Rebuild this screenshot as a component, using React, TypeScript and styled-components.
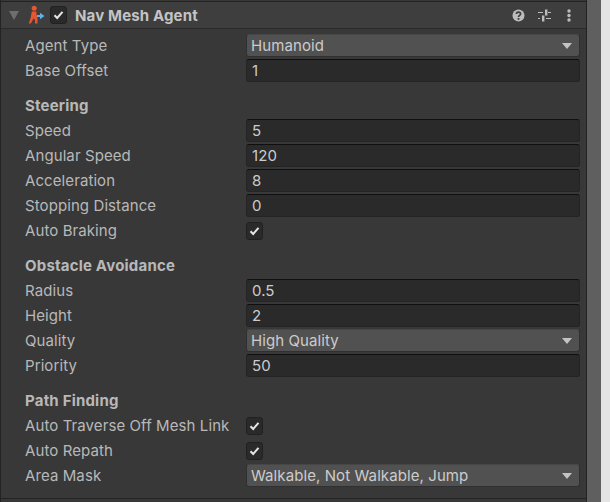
import React from 'react';
import styled, { createGlobalStyle } from 'styled-components';

const GlobalStyle = createGlobalStyle`
  html, body {
    margin: 0;
    padding: 0;
    background: #383838;
  }
`

const Pagina = styled.div`
  width: 610px;
  height: 502px;
  display: flex;
  overflow: hidden;
  font-family: Inter, "Liberation Sans", sans-serif;
  font-size: 15px;
  letter-spacing: 0.09px;
  color: #b8b8b8;
`

const Inspector = styled.div`
  width: 587px;
  box-sizing: border-box;
  border-left: 1px solid #232323;
  border-right: 1px solid #232323;
  display: flex;
  flex-direction: column;
`

const Cabecalho = styled.div`
  height: 28px;
  flex-shrink: 0;
  box-sizing: border-box;
  margin-top: 1px;
  border-top: 1px solid #232323;
  border-bottom: 1px solid #2a2a2a;
  background: #3e3e3e;
  display: flex;
  align-items: center;
  padding-left: 8px;
`

const Seta = styled.div`
  width: 0;
  height: 0;
  border-left: 5px solid transparent;
  border-right: 5px solid transparent;
  border-top: 9px solid #6e6e6e;
  margin-right: 9px;
`

const Titulo = styled.span`
  font-weight: 700;
  letter-spacing: 0.15px;
  color: #c4c4c4;
  margin-left: 8px;
  flex: 1;
`

const IconesCabecalho = styled.div`
  display: flex;
  align-items: center;
  column-gap: 13px;
  margin-right: 15px;
`

const Conteudo = styled.div`
  display: flex;
  flex-direction: column;
  padding: 4px 6px 0 24px;
  flex: 1;
`

const Linha = styled.div`
  height: 25px;
  display: grid;
  grid-template-columns: 221px 1fr;
  align-items: center;
`

const Secao = styled.div`
  height: 25px;
  margin-top: 10px;
  display: flex;
  align-items: center;
  font-weight: 700;
  letter-spacing: 0.2px;
`

const Rotulo = styled.span`
  white-space: nowrap;
`

const Campo = styled.div`
  height: 23px;
  box-sizing: border-box;
  background: #2a2a2a;
  border: 1px solid #242424;
  border-top-color: #0f0f0f;
  border-radius: 3px;
  color: #cccccc;
  padding-left: 5px;
  display: flex;
  align-items: center;
`

const Selecao = styled.div`
  height: 23px;
  box-sizing: border-box;
  background: #515151;
  border: 1px solid #303030;
  border-top-color: #464646;
  border-radius: 3px;
  color: #cccccc;
  padding: 0 7px 0 4px;
  display: flex;
  align-items: center;
  justify-content: space-between;
`

const SetaSelecao = styled.div`
  width: 0;
  height: 0;
  border-left: 5px solid transparent;
  border-right: 5px solid transparent;
  border-top: 6px solid #c4c4c4;
`

const Caixa = styled.div`
  width: 17px;
  height: 18px;
  box-sizing: border-box;
  background: #2a2a2a;
  border: 1px solid #212121;
  border-radius: 3px;
  display: flex;
  align-items: center;
  justify-content: center;
`

const Rodape = styled.div`
  height: 3px;
  flex-shrink: 0;
  border-top: 1px solid #232323;
`

const Barra = styled.div`
  width: 14px;
  background: #5f5f5f;
`

const Fundo = styled.div`
  flex: 1;
  background: #e4e4e4;
`

const Marca = () => (
  <svg width="11" height="10" viewBox="0 0 11 10">
    <path d="M1.5 5.2 L4.2 8 L9.5 1.8" fill="none" stroke="#e6e6e6" strokeWidth="2" />
  </svg>
)

const Verificacao = () => (
  <Caixa>
    <Marca />
  </Caixa>
)

const IconeAgente = () => (
  <svg width="22" height="20" viewBox="0 0 22 20">
    <circle cx="6.2" cy="3.2" r="2.5" fill="#e8552f" />
    <path d="M3.8 6.5 H8.2 L8.8 11 L9.5 13.5 V18.5 H7 V15 L5.8 13.2 L4.5 15.5 L2.8 18.5 H0.8 L2.6 13 Z" fill="#e8552f" />
    <path d="M9 11 H13" stroke="#58b4e8" strokeWidth="2" />
    <path d="M12 7.8 L16.5 11 L12 14.2 Z" fill="#58b4e8" />
  </svg>
)

const IconeAjuda = () => (
  <svg width="13" height="13" viewBox="0 0 13 13">
    <circle cx="6.5" cy="6.5" r="6" fill="#bcbcbc" />
    <path d="M4.4 5 C4.4 2.6 8.6 2.6 8.6 5 C8.6 6.4 6.5 6.3 6.5 8" fill="none" stroke="#3e3e3e" strokeWidth="1.7" />
    <rect x="5.6" y="9" width="1.8" height="1.8" fill="#3e3e3e" />
  </svg>
)

const IconeAjustes = () => (
  <svg width="13" height="13" viewBox="0 0 13 13">
    <path d="M0 3.5 H5 M10 3.5 H13 M0 9.5 H2 M8 9.5 H13" stroke="#bcbcbc" strokeWidth="1.2" />
    <rect x="7" y="0.5" width="2.4" height="6" fill="#bcbcbc" />
    <rect x="4" y="6.5" width="2.4" height="6" fill="#bcbcbc" />
  </svg>
)

const IconeMenu = () => (
  <svg width="7" height="13" viewBox="0 0 7 13">
    <circle cx="5" cy="2" r="1.7" fill="#bcbcbc" />
    <circle cx="5" cy="6.5" r="1.7" fill="#bcbcbc" />
    <circle cx="5" cy="11" r="1.7" fill="#bcbcbc" />
  </svg>
)

type Item =
  | { tipo: 'campo' | 'selecao'; rotulo: string; valor: string }
  | { tipo: 'caixa'; rotulo: string }
  | { tipo: 'secao'; rotulo: string }

const itens: Item[] = [
  { tipo: 'selecao', rotulo: 'Agent Type', valor: 'Humanoid' },
  { tipo: 'campo', rotulo: 'Base Offset', valor: '1' },
  { tipo: 'secao', rotulo: 'Steering' },
  { tipo: 'campo', rotulo: 'Speed', valor: '5' },
  { tipo: 'campo', rotulo: 'Angular Speed', valor: '120' },
  { tipo: 'campo', rotulo: 'Acceleration', valor: '8' },
  { tipo: 'campo', rotulo: 'Stopping Distance', valor: '0' },
  { tipo: 'caixa', rotulo: 'Auto Braking' },
  { tipo: 'secao', rotulo: 'Obstacle Avoidance' },
  { tipo: 'campo', rotulo: 'Radius', valor: '0.5' },
  { tipo: 'campo', rotulo: 'Height', valor: '2' },
  { tipo: 'selecao', rotulo: 'Quality', valor: 'High Quality' },
  { tipo: 'campo', rotulo: 'Priority', valor: '50' },
  { tipo: 'secao', rotulo: 'Path Finding' },
  { tipo: 'caixa', rotulo: 'Auto Traverse Off Mesh Link' },
  { tipo: 'caixa', rotulo: 'Auto Repath' },
  { tipo: 'selecao', rotulo: 'Area Mask', valor: 'Walkable, Not Walkable, Jump' },
]

const renderItem = (item: Item) => {
  if (item.tipo === 'secao') {
    return <Secao key={item.rotulo}>{item.rotulo}</Secao>
  }
  return (
    <Linha key={item.rotulo}>
      <Rotulo>{item.rotulo}</Rotulo>
      {item.tipo === 'campo' && <Campo>{item.valor}</Campo>}
      {item.tipo === 'selecao' && (
        <Selecao>
          {item.valor}
          <SetaSelecao />
        </Selecao>
      )}
      {item.tipo === 'caixa' && <Verificacao />}
    </Linha>
  )
}

export default function App() {
  return (
    <Pagina>
      <GlobalStyle />
      <Inspector>
        <Cabecalho>
          <Seta />
          <IconeAgente />
          <Verificacao />
          <Titulo>Nav Mesh Agent</Titulo>
          <IconesCabecalho>
            <IconeAjuda />
            <IconeAjustes />
            <IconeMenu />
          </IconesCabecalho>
        </Cabecalho>
        <Conteudo>{itens.map(renderItem)}</Conteudo>
        <Rodape />
      </Inspector>
      <Barra />
      <Fundo />
    </Pagina>
  )
}
